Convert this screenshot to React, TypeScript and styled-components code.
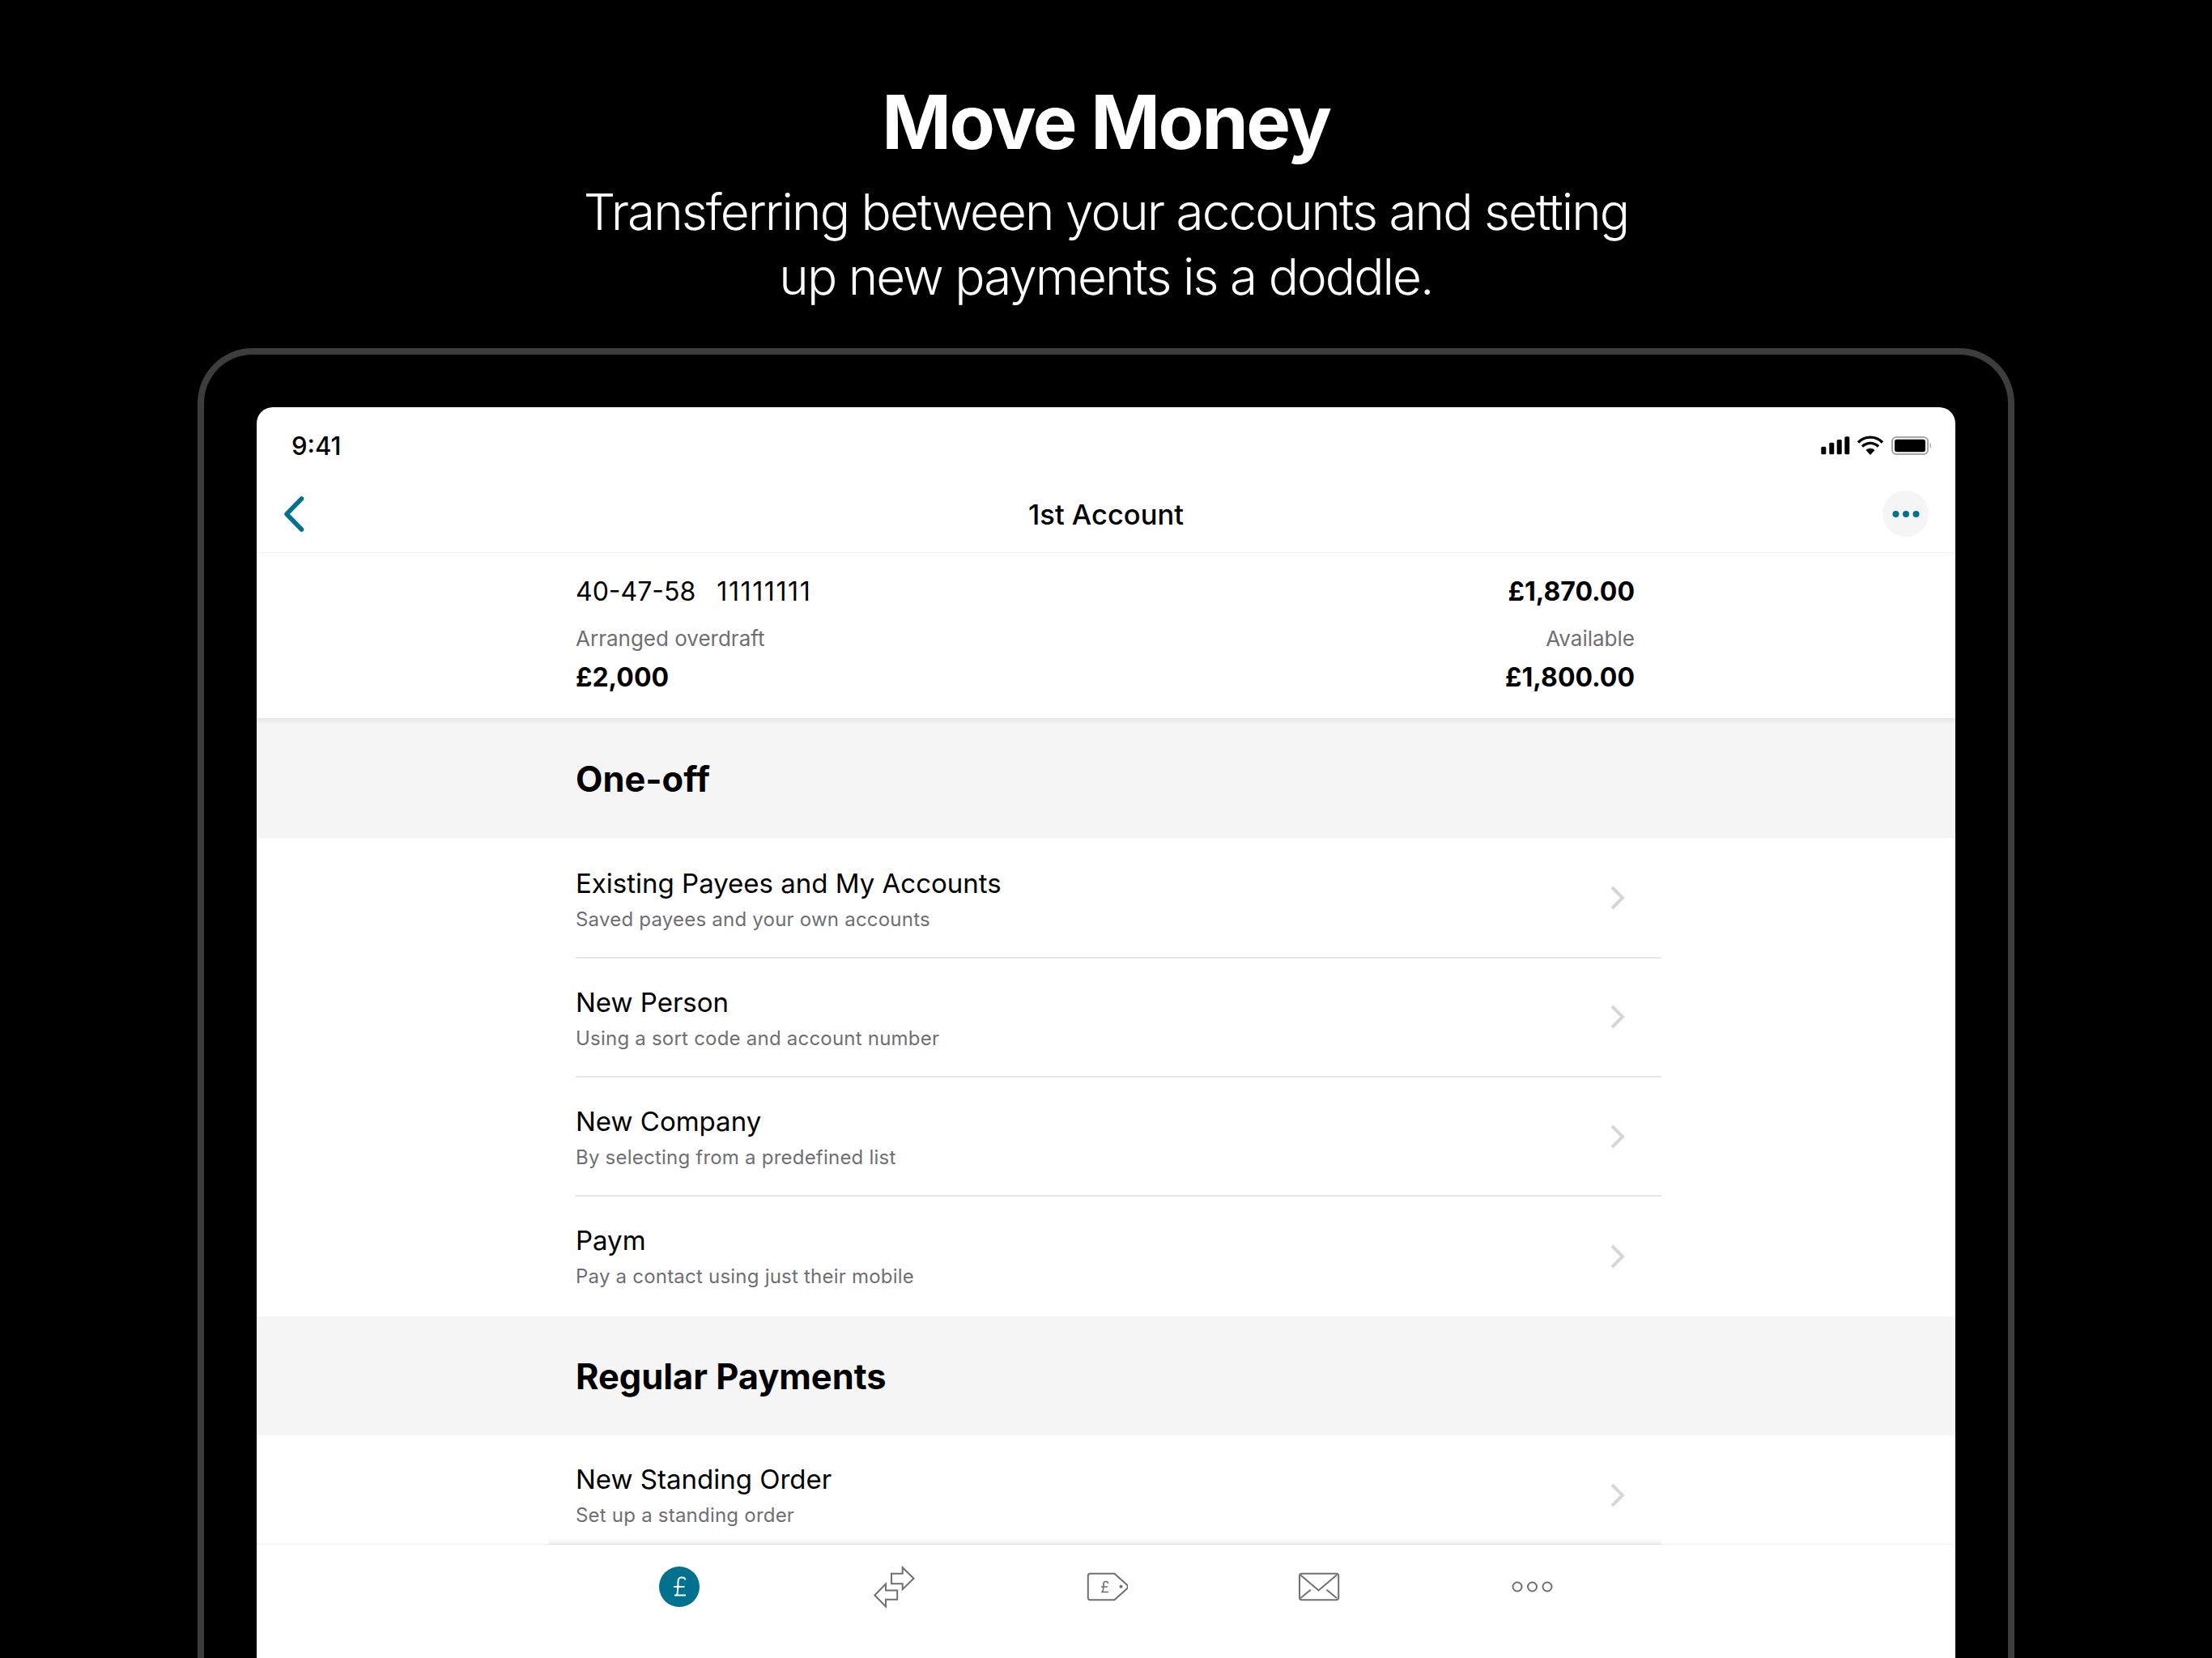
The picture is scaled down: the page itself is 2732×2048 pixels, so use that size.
import React from "react";
import styled, { createGlobalStyle } from "styled-components";

const Global = createGlobalStyle`
  html, body { margin: 0; padding: 0; background: #000; }
  body { width: 2732px; height: 2048px; overflow: hidden; font-family: Inter, "Liberation Sans", sans-serif; }
  * { box-sizing: border-box; }
`;

const Page = styled.div`
  width: 2732px;
  height: 2048px;
  background: #000;
  overflow: hidden;
  display: flex;
  flex-direction: column;
  align-items: center;
`;

const Hero = styled.header`
  height: 430px;
  flex: none;
  padding-top: 98px;
  text-align: center;
  color: #fff;
`;

const Headline = styled.h1`
  margin: 0;
  font-size: 92px;
  line-height: 106px;
  font-weight: 700;
  letter-spacing: -2.5px;
`;

const Tagline = styled.p`
  margin: 18px 0 0;
  font-size: 62px;
  line-height: 80px;
  font-weight: 280;
  letter-spacing: -1.95px;
`;

const Device = styled.div`
  width: 2244px;
  height: 1618px;
  border: 8px solid #3d3d3d;
  border-bottom: 0;
  border-radius: 68px 68px 0 0;
  padding: 65px 65px 0;
  flex: none;
`;

const Screen = styled.div`
  height: 1545px;
  background: #fff;
  border-radius: 20px 20px 0 0;
  display: flex;
  flex-direction: column;
  overflow: hidden;
`;

const StatusBar = styled.div`
  height: 56px;
  flex: none;
  padding: 30px 30px 0 43px;
  display: flex;
  justify-content: space-between;
  align-items: flex-start;
`;

const Clock = styled.span`
  font-size: 31px;
  line-height: 36px;
  font-weight: 500;
  color: #000;
`;

const StatusIcons = styled.svg`
  width: 140px;
  height: 32px;
  margin-top: 2px;
`;

const NavBar = styled.div`
  height: 124px;
  flex: none;
  padding: 28px 33px 0 33px;
  border-bottom: 1px solid #f2f2f2;
  display: grid;
  grid-template-columns: 1fr auto 1fr;
  align-items: center;
`;

const BackIcon = styled.svg`
  width: 26px;
  height: 44px;
`;

const NavTitle = styled.div`
  font-size: 34.5px;
  font-weight: 500;
  color: #000;
  padding-top: 2px;
`;

const MoreButton = styled.div`
  width: 57px;
  height: 57px;
  justify-self: end;
  border-radius: 50%;
  background: #f5f5f5;
  display: flex;
  align-items: center;
  justify-content: center;
`;

const AccountPanel = styled.div`
  height: 204px;
  flex: none;
  padding: 22px 396px 0 394px;
  display: grid;
  grid-template-columns: 1fr auto;
  grid-template-rows: 50px 66px 30px;
  align-items: center;
`;

const AccountNumber = styled.div`
  font-size: 32px;
  color: #000;
  display: flex;
  gap: 26px;
`;

const AccountDigits = styled.span`
  letter-spacing: 1.6px;
`;

const Amount = styled.div<{ $right?: boolean }>`
  font-size: 32px;
  font-weight: 700;
  color: #000;
  text-align: ${(p) => (p.$right ? "right" : "left")};
`;

const Caption = styled.div<{ $right?: boolean }>`
  font-size: 26px;
  color: #6f6f73;
  text-align: ${(p) => (p.$right ? "right" : "left")};
`;

const SectionBand = styled.div`
  height: 147px;
  flex: none;
  background: #f5f5f5;
  padding-left: 394px;
  display: flex;
  align-items: center;
  font-size: 43.4px;
  font-weight: 700;
  color: #000;
`;

const ShadowBand = styled(SectionBand)`
  height: 148px;
  padding-top: 2px;
  background: linear-gradient(#e6e6e6 0, #f5f5f5 8px);
`;

const Rows = styled.div`
  padding: 1.5px 0 0 394px;
  flex: none;
  height: 591px;
`;

const ClippedRows = styled(Rows)`
  flex: 1;
  height: auto;
  min-height: 0;
  padding-top: 0;
  overflow: hidden;
`;

const Row = styled.div`
  width: 1341px;
  height: 147.3px;
  padding-right: 45px;
  border-bottom: 2px solid #e6e6e6;
  display: flex;
  justify-content: space-between;
  align-items: center;
  &:last-child { border-bottom: 0; }
`;

const RowText = styled.div`
  display: flex;
  flex-direction: column;
  align-self: flex-start;
  padding-top: 32px;
`;

const RowTitle = styled.div`
  font-size: 33px;
  line-height: 44px;
  color: #000;
`;

const RowSub = styled.div`
  font-size: 24px;
  line-height: 46px;
  letter-spacing: 0.22px;
  color: #6f6f73;
`;

const Chevron = styled.svg`
  width: 18px;
  height: 30px;
`;

const TabBar = styled.nav`
  height: 141px;
  flex: none;
  background: #fff;
  border-top: 1px solid #f2f2f2;
  box-shadow: 0 -3px 6px rgba(0, 0, 0, 0.015);
  display: grid;
  grid-template-columns: repeat(5, 263.5px);
  justify-content: center;
  justify-items: center;
  align-items: start;
  padding-top: 25px;
  position: relative;
`;

const TabShadow = styled.div`
  position: absolute;
  top: -8px;
  left: 361px;
  width: 1374px;
  height: 8px;
  border-bottom: 1px solid #e0e0e0;
  background: linear-gradient(rgba(0, 0, 0, 0), rgba(0, 0, 0, 0.05));
`;

const TabIcon = styled.svg`
  width: 54px;
  height: 54px;
`;

const TEAL = "#00728f";
const GREY = "#707074";

const rowsA = [
  ["Existing Payees and My Accounts", "Saved payees and your own accounts"],
  ["New Person", "Using a sort code and account number"],
  ["New Company", "By selecting from a predefined list"],
  ["Paym", "Pay a contact using just their mobile"],
];

function ListRow({ title, sub }: { title: string; sub: string }) {
  return (
    <Row>
      <RowText>
        <RowTitle>{title}</RowTitle>
        <RowSub>{sub}</RowSub>
      </RowText>
      <Chevron viewBox="0 0 18 30">
        <path d="M2 2 L15 15 L2 28" fill="none" stroke="#d5d5da" strokeWidth="4" />
      </Chevron>
    </Row>
  );
}

export default function App() {
  return (
    <Page>
      <Global />
      <Hero>
        <Headline>Move Money</Headline>
        <Tagline>
          Transferring between your accounts and setting
          <br />
          up new payments is a doddle.
        </Tagline>
      </Hero>
      <Device>
        <Screen>
          <StatusBar>
            <Clock>9:41</Clock>
            <StatusIcons viewBox="0 0 140 32">
              <rect x="4.3" y="16.7" width="6" height="9.6" rx="1.5" />
              <rect x="14.3" y="11.7" width="6" height="14.6" rx="1.5" />
              <rect x="23.7" y="8" width="6" height="18.3" rx="1.5" />
              <rect x="33.3" y="4.3" width="6" height="22" rx="1.5" />
              <path d="M50 11.5 C58 3 72 3 80 11.5" fill="none" stroke="#000" strokeWidth="3.4" />
              <path d="M55 16.5 C61 11 69 11 75 16.5" fill="none" stroke="#000" strokeWidth="3.4" />
              <path d="M59.5 21 C63 18 67 18 70.5 21 L65 27 Z" />
              <rect x="92" y="5" width="44" height="21" rx="5" fill="none" stroke="#a6a6a6" strokeWidth="2" />
              <rect x="95" y="7.7" width="38" height="15.5" rx="3" />
              <path d="M138.7 12 C141 13 141 18 138.7 19 Z" fill="#a6a6a6" />
            </StatusIcons>
          </StatusBar>
          <NavBar>
            <BackIcon viewBox="0 0 26 44">
              <path d="M22.5 3 L4 22 L22.5 41" fill="none" stroke={TEAL} strokeWidth="5.5" strokeLinecap="round" strokeLinejoin="round" />
            </BackIcon>
            <NavTitle>1st Account</NavTitle>
            <MoreButton>
              <svg width="34" height="10" viewBox="0 0 34 10">
                <circle cx="4.5" cy="5" r="4" fill={TEAL} />
                <circle cx="17" cy="5" r="4" fill={TEAL} />
                <circle cx="29.5" cy="5" r="4" fill={TEAL} />
              </svg>
            </MoreButton>
          </NavBar>
          <AccountPanel>
            <AccountNumber>
              <span>40-47-58</span>
              <AccountDigits>11111111</AccountDigits>
            </AccountNumber>
            <Amount $right>£1,870.00</Amount>
            <Caption>Arranged overdraft</Caption>
            <Caption $right>Available</Caption>
            <Amount>£2,000</Amount>
            <Amount $right>£1,800.00</Amount>
          </AccountPanel>
          <ShadowBand>One-off</ShadowBand>
          <Rows>
            {rowsA.map(([t, s]) => (
              <ListRow key={t} title={t} sub={s} />
            ))}
          </Rows>
          <SectionBand>Regular Payments</SectionBand>
          <ClippedRows>
            <ListRow title="New Standing Order" sub="Set up a standing order" />
          </ClippedRows>
          <TabBar>
            <TabShadow />
            <TabIcon viewBox="0 0 54 54">
              <circle cx="27" cy="27" r="25" fill={TEAL} />
              <path d="M34.5 18.5 C33.5 14.5 25.5 14 25.5 20.5 C25.5 28 25.5 33 24 37.5 M20 27 H33.5 M21 37.5 H35" fill="none" stroke="#fff" strokeWidth="2" />
            </TabIcon>
            <TabIcon viewBox="-1 0 54 54">
              <path d="M24 10.8 H37.7 V3.2 L51.5 16.8 L37.7 30.2 V23.2 H24 Z" fill="none" stroke={GREY} strokeWidth="2" />
              <path d="M3.3 37.5 L17 23.5 V31.5 H31.2 V42.8 H17 V51.5 Z" fill="none" stroke={GREY} strokeWidth="2" />
            </TabIcon>
            <TabIcon viewBox="-2.5 0 54 54">
              <path d="M5 10.8 H34.9 L50.8 25 Q52 27 50.8 29 L34.9 43.2 H5 Q2.3 43.2 2.3 40.5 V13.5 Q2.3 10.8 5 10.8 Z" fill="none" stroke={GREY} strokeWidth="2" />
              <path d="M27 23 C26.5 19.5 21.5 19.5 21.5 23.5 C21.5 28 21.5 31 20 33.5 M18.5 27 H26.5 M18.5 33.5 H27.5" fill="none" stroke={GREY} strokeWidth="1.6" />
              <circle cx="43" cy="26.8" r="2" fill={GREY} />
            </TabIcon>
            <TabIcon viewBox="0.5 0 54 54">
              <rect x="2.5" y="10.8" width="48.2" height="32.4" rx="3" fill="none" stroke={GREY} strokeWidth="2" />
              <path d="M3.8 12.5 L26 31.5 L48.5 12.5 M3.8 41 L16.2 30.8 M36 30.8 L48.5 41" fill="none" stroke={GREY} strokeWidth="2" />
            </TabIcon>
            <TabIcon viewBox="0 0 54 54">
              <circle cx="8" cy="27" r="5.5" fill="none" stroke={GREY} strokeWidth="2" />
              <circle cx="26.5" cy="27" r="5.5" fill="none" stroke={GREY} strokeWidth="2" />
              <circle cx="45" cy="27" r="5.5" fill="none" stroke={GREY} strokeWidth="2" />
            </TabIcon>
          </TabBar>
        </Screen>
      </Device>
    </Page>
  );
}
